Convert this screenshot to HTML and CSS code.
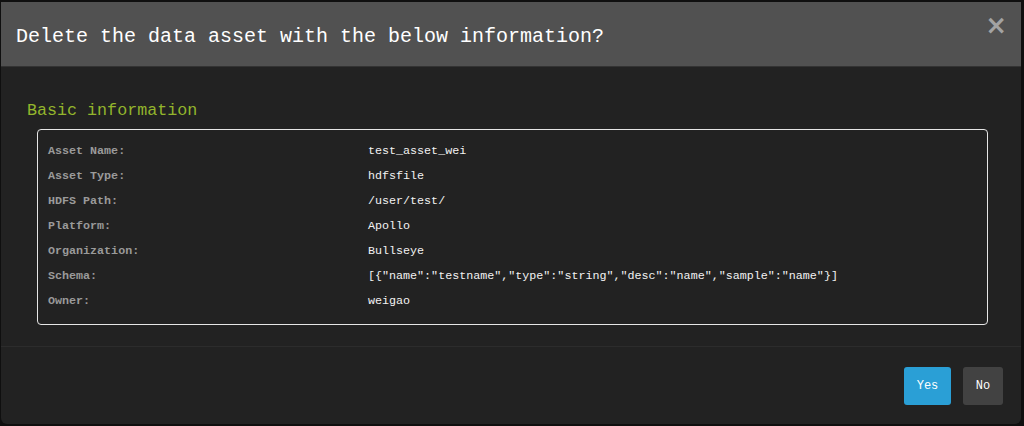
FILE: index.html
```html
<!DOCTYPE html>
<html lang="en">
<head>
<meta charset="utf-8">
<title>Delete data asset</title>
<link rel="stylesheet" href="styles.css">
</head>
<body>
<div class="modal">
  <div class="modal-header">
    <h4 class="modal-title">Delete the data asset with the below information?</h4>
    <button class="close" type="button" aria-label="Close">×</button>
  </div>
  <div class="modal-body">
    <h5 class="section-title">Basic information</h5>
    <div class="info-box">
      <div class="row"><span class="label">Asset Name:</span><span class="value">test_asset_wei</span></div>
      <div class="row"><span class="label">Asset Type:</span><span class="value">hdfsfile</span></div>
      <div class="row"><span class="label">HDFS Path:</span><span class="value">/user/test/</span></div>
      <div class="row"><span class="label">Platform:</span><span class="value">Apollo</span></div>
      <div class="row"><span class="label">Organization:</span><span class="value">Bullseye</span></div>
      <div class="row"><span class="label">Schema:</span><span class="value">[{"name":"testname","type":"string","desc":"name","sample":"name"}]</span></div>
      <div class="row"><span class="label">Owner:</span><span class="value">weigao</span></div>
    </div>
  </div>
  <div class="modal-footer">
    <button class="btn btn-primary" type="button">Yes</button>
    <button class="btn btn-default" type="button">No</button>
  </div>
</div>
</body>
</html>
```

FILE: styles.css
```css
html, body {
  margin: 0;
  padding: 0;
  height: 100%;
}
body {
  background: #0f0f0f;
  font-family: "Liberation Mono", "DejaVu Sans Mono", monospace;
  overflow: hidden;
}
.modal {
  margin: 2px 3px 0 1px;
  height: 422px;
  background: #222222;
  border-radius: 0 0 6px 6px;
  display: flex;
  flex-direction: column;
  overflow: hidden;
}
.modal-header {
  background: #515151;
  border-bottom: 1px solid #333333;
  display: flex;
  align-items: center;
  justify-content: space-between;
  padding: 0 14px 0 15px;
  box-sizing: border-box;
  height: 65px;
  flex: none;
}
.modal-title {
  margin: 0;
  font-size: 20px;
  font-weight: normal;
  color: #ffffff;
  line-height: 24px;
  position: relative;
  top: 3px;
}
.close {
  background: none;
  border: 0;
  padding: 0;
  color: #a3a3a3;
  font-family: "DejaVu Sans", sans-serif;
  font-size: 26px;
  font-weight: bold;
  line-height: 26px;
  position: relative;
  top: -9px;
  cursor: pointer;
}
.modal-body {
  padding: 34px 33px 0 26px;
  flex: none;
}
.section-title {
  margin: 0 0 8px 0;
  font-size: 16.7px;
  line-height: 20px;
  font-weight: normal;
  color: #93b52c;
}
.info-box {
  margin-left: 10px;
  border: 1px solid #e6e6e6;
  border-radius: 4px;
  padding: 9px 10px 11px 10px;
  height: 196px;
  box-sizing: border-box;
}
.row {
  display: flex;
  height: 25px;
  line-height: 25px;
  font-size: 11.7px;
}
.label {
  width: 320px;
  flex: none;
  color: #9a9a9a;
  font-weight: bold;
}
.value {
  color: #f2f2f2;
  white-space: nowrap;
}
.modal-footer {
  margin-top: 21px;
  border-top: 1px solid #2c2c2c;
  padding: 20px 18px 0 0;
  display: flex;
  justify-content: flex-end;
  gap: 12px;
}
.btn {
  height: 38px;
  border: 0;
  border-radius: 3px;
  color: #ffffff;
  font-family: "Liberation Mono", "DejaVu Sans Mono", monospace;
  font-size: 12px;
  padding: 0;
  cursor: pointer;
}
.btn-primary {
  width: 47px;
  background: #2a9fd6;
}
.btn-default {
  width: 40px;
  background: #424242;
}
```
